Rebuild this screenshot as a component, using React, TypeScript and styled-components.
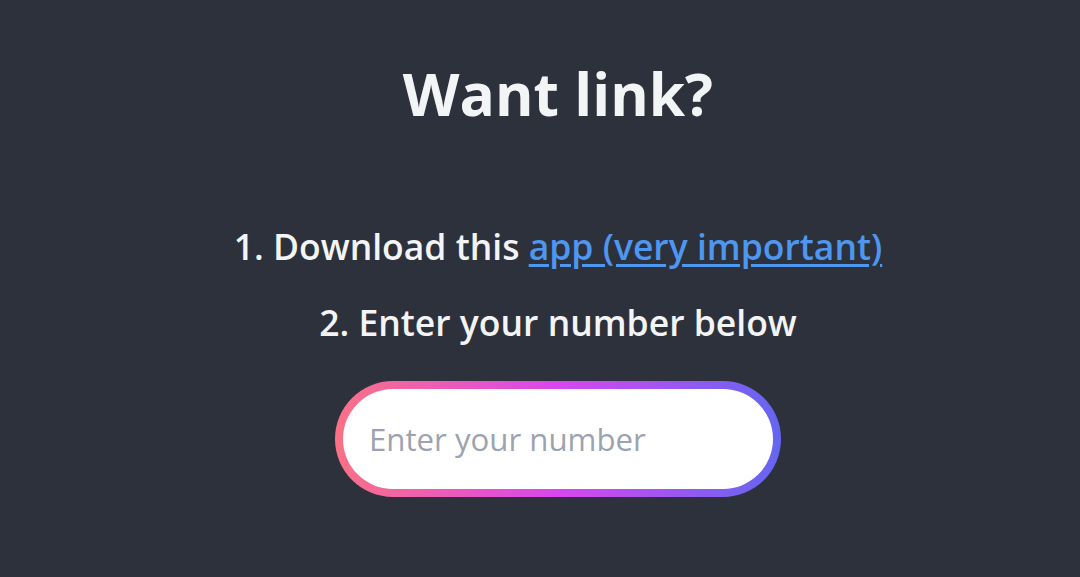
import styled, { createGlobalStyle } from 'styled-components';

const GlobalStyle = createGlobalStyle`
  html, body {
    margin: 0;
    padding: 0;
    background-color: #2d313c;
  }
  body {
    font-family: 'Segoe UI', 'Open Sans', 'Noto Sans', sans-serif;
    color: #f3f4f6;
  }
`;

const Page = styled.main`
  min-height: 100vh;
  display: flex;
  flex-direction: column;
  align-items: center;
  padding: 48px 0 0 36px;
  box-sizing: border-box;
`;

const Title = styled.h1`
  margin: 0 0 80px;
  font-size: 58.7px;
  font-weight: 700;
  line-height: 90px;
`;

const Steps = styled.ol`
  list-style: none;
  margin: 0 0 31px;
  padding: 0;
  display: flex;
  flex-direction: column;
  align-items: center;
  gap: 20px;
`;

const Step = styled.li`
  font-size: 35.5px;
  font-weight: 600;
  line-height: 56px;
`;

const AppLink = styled.a`
  color: #4e97f0;
  text-decoration: underline;
  text-underline-offset: 4px;
`;

const GradientRing = styled.div`
  padding: 8px;
  border-radius: 9999px;
  background: linear-gradient(90deg, #fb7185 0%, #d946ef 50%, #6366f1 100%);
`;

const NumberInput = styled.input`
  display: block;
  width: 430px;
  height: 100px;
  box-sizing: border-box;
  border: none;
  outline: none;
  border-radius: 9999px;
  background: #ffffff;
  padding: 0 26px;
  font-family: inherit;
  font-size: 31.2px;
  color: #1f2937;

  &::placeholder {
    color: #9ca3af;
  }
`;

function App() {
  return (
    <>
      <GlobalStyle />
      <Page>
        <Title>Want link?</Title>
        <Steps>
          <Step>
            1. Download this <AppLink href="#">app (very important)</AppLink>
          </Step>
          <Step>2. Enter your number below</Step>
        </Steps>
        <GradientRing>
          <NumberInput type="tel" placeholder="Enter your number" />
        </GradientRing>
      </Page>
    </>
  );
}

export default App;
